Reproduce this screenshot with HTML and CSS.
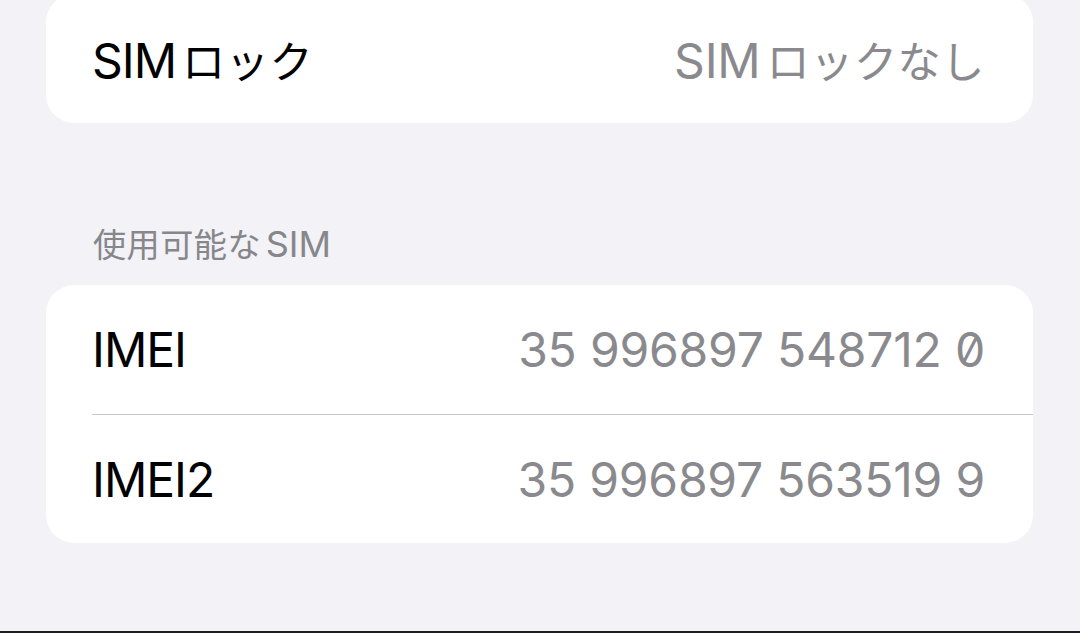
FILE: index.html
```html
<!DOCTYPE html>
<html lang="ja">
<head>
    <meta charset="UTF-8">
    <meta name="viewport" content="width=device-width, initial-scale=1.0">
    <title>情報</title>
    <link rel="stylesheet" href="styles.css">
</head>
<body>

<div class="page">
    <div class="group group-top">
        <div class="row">
            <span class="label">SIM<span class="ja">ロック</span></span>
            <span class="value">SIM<span class="ja">ロックなし</span></span>
        </div>
    </div>

    <div class="section-title"><span class="ja">使用可能な</span>SIM</div>
    <div class="group">
        <div class="row">
            <span class="label">IMEI</span>
            <span class="value num">35 996897 548712 0</span>
        </div>
        <div class="row">
            <span class="label">IMEI2</span>
            <span class="value num">35 996897 563519 9</span>
        </div>
    </div>
</div>

</body>
</html>
```

FILE: styles.css
```css
html, body {
    margin: 0;
    padding: 0;
    height: 100%;
}
body {
    font-family: Inter, "Noto Sans CJK JP", sans-serif;
    background-color: #f2f2f7;
    color: #000;
    overflow: hidden;
}
.page {
    display: flow-root;
    height: 631px;
    border-bottom: 2px solid #1c1c1e;
}
.group {
    margin: 0 47px 0 46px;
    background-color: #fff;
    border-radius: 28px;
    overflow: hidden;
}
.group-top {
    margin-top: -6px;
}
.row {
    display: flex;
    align-items: center;
    justify-content: space-between;
    height: 129px;
    margin-left: 46px;
    padding-right: 48px;
    box-sizing: border-box;
}
.row + .row {
    border-top: 1px solid #c8c8cc;
}
.label {
    font-size: 48px;
    letter-spacing: -1px;
}
.value {
    font-size: 48px;
    color: #8a8a8e;
    letter-spacing: -0.2px;
}
/* kana sit a little smaller and looser next to latin text */
.ja {
    font-size: 0.9em;
    letter-spacing: 0.5px;
    margin-left: 0.14em;
}
.section-title .ja {
    font-size: 0.92em;
    margin-left: 0;
    margin-right: 0.14em;
    letter-spacing: 0.5px;
}
.num {
    font-feature-settings: "zero";
}
.section-title {
    margin: 100px 0 19px 93px;
    font-size: 36px;
    line-height: 42px;
    color: #86868b;
}
```
